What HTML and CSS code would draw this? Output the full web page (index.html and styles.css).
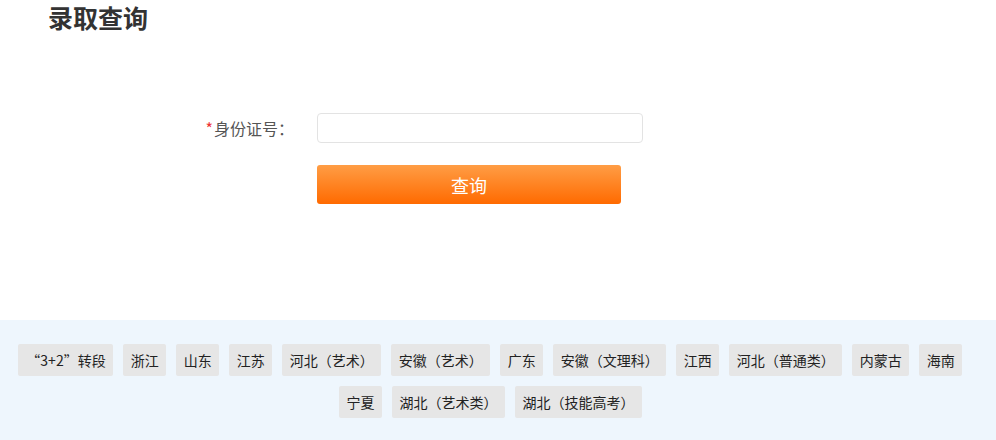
FILE: index.html
```html
<!DOCTYPE html>
<html lang="zh-CN">
<head>
  <meta charset="UTF-8" />
  <meta name="viewport" content="width=device-width, initial-scale=1.0"/>
  <title>录取查询</title>
  <link rel="stylesheet" href="styles.css">
</head>
<body>

  <!-- 标题 -->
  <h2 class="page-title">录取查询</h2>

  <!-- 查询表单 -->
  <div class="query-form">
    <div class="form-row">
      <label class="form-label" for="idCard"><span class="required">*</span>身份证号：</label>
      <input type="text" id="idCard" class="form-input" />
    </div>
    <div class="form-row">
      <span></span>
      <button class="btn-query" onclick="doQuery()">查询</button>
    </div>
  </div>

  <!-- 省份入口 -->
  <div class="province-bar">
    <div class="province-list">
      <a href="#" class="tag">“3+2”转段</a>
      <a href="#" class="tag">浙江</a>
      <a href="#" class="tag">山东</a>
      <a href="#" class="tag">江苏</a>
      <a href="#" class="tag">河北（艺术）</a>
      <a href="#" class="tag">安徽（艺术）</a>
      <a href="#" class="tag">广东</a>
      <a href="#" class="tag">安徽（文理科）</a>
      <a href="#" class="tag">江西</a>
      <a href="#" class="tag">河北（普通类）</a>
      <a href="#" class="tag">内蒙古</a>
      <a href="#" class="tag">海南</a>
      <a href="#" class="tag">宁夏</a>
      <a href="#" class="tag">湖北（艺术类）</a>
      <a href="#" class="tag">湖北（技能高考）</a>
    </div>
  </div>

<script>
  function doQuery() {
    const id = document.getElementById('idCard').value;
    if (!id) {
      alert("请输入身份证号");
    }
  }
</script>
</body>
</html>
```

FILE: styles.css
```css
* {
  box-sizing: border-box;
  margin: 0;
  padding: 0;
}

body {
  font-family: "Noto Sans CJK SC", "Liberation Sans", sans-serif;
  color: #333;
  background: #fff;
}

.page-title {
  font-size: 25px;
  font-weight: bold;
  line-height: 30px;
  padding: 2px 0 0 48px;
  color: #333;
}

/* ===== 表单 ===== */
.query-form {
  padding-top: 81px;
  height: 288px;
}

.form-row {
  display: grid;
  grid-template-columns: 294px 326px;
  column-gap: 23px;
  align-items: center;
  margin-bottom: 22px;
}

.form-label {
  text-align: right;
  font-size: 16px;
  color: #555;
}

.required {
  color: #e33;
  margin-right: 1px;
}

.form-input {
  height: 30px;
  border: 1px solid #e3e3e3;
  border-radius: 4px;
  padding: 0 8px;
  outline: none;
}

.btn-query {
  width: 304px;
  height: 39px;
  border: none;
  border-radius: 3px;
  background: linear-gradient(to bottom, #ff9d45, #ff6a00);
  color: #fff;
  font-family: inherit;
  font-size: 18px;
  cursor: pointer;
}

/* ===== 省份 ===== */
.province-bar {
  background-color: #eef6fd;
  padding: 24px 0 22px;
}

.province-list {
  display: flex;
  flex-wrap: wrap;
  justify-content: center;
  gap: 10px;
  padding-right: 16px;
}

.tag {
  display: block;
  height: 32px;
  line-height: 32px;
  padding: 0 7px 0 8px;
  background-color: #e6e6e6;
  border-radius: 2px;
  font-size: 14px;
  color: #222;
  text-decoration: none;
}
```
